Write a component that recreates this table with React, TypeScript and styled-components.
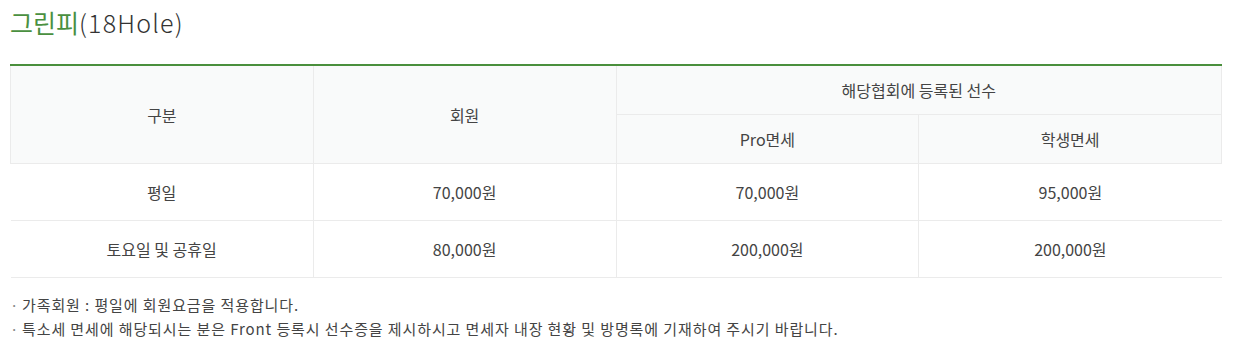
import React from 'react';
import styled, { createGlobalStyle } from 'styled-components';

const GlobalStyle = createGlobalStyle`
  body {
    margin: 0;
    background: #fff;
    font-family: 'Noto Sans CJK KR', 'Noto Sans', sans-serif;
    color: #333;
  }
`;

const Section = styled.section`
  padding: 0 11px 0 10px;
`;

const Title = styled.h2`
  margin: 0;
  padding-top: 4px;
  font-size: 25px;
  font-weight: 400;
  line-height: 36px;
  color: #333;
`;

const Green = styled.span`
  color: #4a9040;
`;

const Sub = styled.span`
  font-weight: 300;
  letter-spacing: 1.2px;
`;

const Table = styled.table`
  width: 100%;
  margin-top: 24px;
  border-collapse: collapse;
  border-top: 2px solid #4a8f3c;
  table-layout: fixed;
  font-size: 16px;
  color: #444;
`;

const Th = styled.th`
  height: 48px;
  padding: 0;
  font-weight: 400;
  background: #f9fafa;
  border: 1px solid #ebebeb;
  text-align: center;
  vertical-align: middle;
`;

const Td = styled.td`
  height: 56px;
  padding: 0;
  text-align: center;
  vertical-align: middle;
  border-bottom: 1px solid #ebebeb;
  border-left: 1px solid #ebebeb;

  &:first-child {
    border-left: none;
  }
`;

const Notes = styled.ul`
  list-style: none;
  margin: 15px 0 0;
  padding: 0;
  font-size: 15px;
  line-height: 24px;
  letter-spacing: 0.9px;
  color: #444;
`;

const Note = styled.li`
  position: relative;
  padding-left: 12px;

  &::before {
    content: '·';
    position: absolute;
    left: 0;
    top: 0;
    color: #888;
  }
`;

const rows = [
  { label: '평일', member: '70,000원', pro: '70,000원', student: '95,000원' },
  { label: '토요일 및 공휴일', member: '80,000원', pro: '200,000원', student: '200,000원' },
];

const App: React.FC = () => {
  return (
    <>
      <GlobalStyle />
      <Section>
        <Title>
          <Green>그린피</Green>
          <Sub>(18Hole)</Sub>
        </Title>
        <Table>
          <thead>
            <tr>
              <Th rowSpan={2}>구분</Th>
              <Th rowSpan={2}>회원</Th>
              <Th colSpan={2}>해당협회에 등록된 선수</Th>
            </tr>
            <tr>
              <Th>Pro면세</Th>
              <Th>학생면세</Th>
            </tr>
          </thead>
          <tbody>
            {rows.map(r => (
              <tr key={r.label}>
                <Td>{r.label}</Td>
                <Td>{r.member}</Td>
                <Td>{r.pro}</Td>
                <Td>{r.student}</Td>
              </tr>
            ))}
          </tbody>
        </Table>
        <Notes>
          <Note>가족회원 : 평일에 회원요금을 적용합니다.</Note>
          <Note>특소세 면세에 해당되시는 분은 Front 등록시 선수증을 제시하시고 면세자 내장 현황 및 방명록에 기재하여 주시기 바랍니다.</Note>
        </Notes>
      </Section>
    </>
  );
};

export default App;
